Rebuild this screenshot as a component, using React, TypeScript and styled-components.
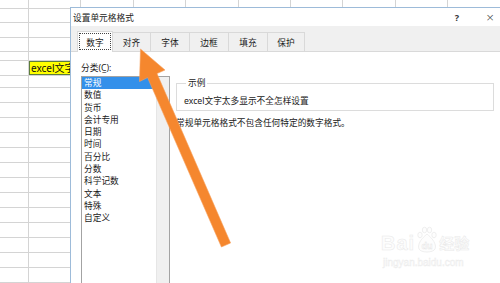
import React from "react";
import styled, { createGlobalStyle } from "styled-components";

const GlobalStyle = createGlobalStyle`
  html, body {
    margin: 0;
    padding: 0;
    background: #ffffff;
  }
  body {
    font-family: "Noto Sans", "Noto Sans CJK SC", sans-serif;
    color: #1a1a1a;
  }
`;

// row heights of the worksheet behind the dialog (px)
const ROWS = [9, 14, 15, 14, 9, 15, 12, 15, 15, 15, 15, 15, 15, 15, 15, 15, 15, 15, 15, 15];
const COLS = 10;

const TABS = ["数字", "对齐", "字体", "边框", "填充", "保护"];
const TAB_WIDTHS = [36, 39, 40, 40, 40, 38];

const CATEGORIES = [
  "常规",
  "数值",
  "货币",
  "会计专用",
  "日期",
  "时间",
  "百分比",
  "分数",
  "科学记数",
  "文本",
  "特殊",
  "自定义",
];

const Screen = styled.div`
  position: relative;
  width: 500px;
  height: 283px;
  overflow: hidden;
  background: #ffffff;
`;

/* worksheet */

const Sheet = styled.div`
  display: grid;
  grid-template-columns: 29px repeat(${COLS - 1}, 52.4px);
  grid-template-rows: ${ROWS.map((h) => `${h}px`).join(" ")};
`;

const Cell = styled.div<{ $marked?: boolean }>`
  box-sizing: border-box;
  border-right: 1px solid #d4d4d4;
  border-bottom: 1px solid #d4d4d4;
  background: ${(p) => (p.$marked ? "#ffff00" : "#ffffff")};
  ${(p) => p.$marked && "box-shadow: inset 0 0 0 1px #5d7d3c;"}
  font-family: "Noto Sans", "Noto Sans CJK SC", sans-serif;
  font-size: 10px;
  line-height: 14px;
  padding-left: 2px;
  white-space: nowrap;
  overflow: visible;
  color: #111;
`;

/* dialog window */

const Dialog = styled.div`
  position: absolute;
  left: 70px;
  top: 7px;
  width: 440px;
  height: 290px;
  box-sizing: border-box;
  border: 1px solid #9dbbd9;
  background: #ffffff;
  display: flex;
  flex-direction: column;
`;

const TitleBar = styled.div`
  height: 19px;
  display: flex;
  align-items: center;
  padding-left: 2px;
  font-size: 8.7px;
`;

const Title = styled.span`
  flex: 1;
`;

const TitleButton = styled.span<{ $close?: boolean }>`
  width: 20px;
  text-align: center;
  font-family: ${(p) => (p.$close ? '"DejaVu Sans"' : '"Noto Sans"')}, sans-serif;
  font-size: ${(p) => (p.$close ? "11px" : "9px")};
  font-weight: ${(p) => (p.$close ? 300 : 700)};
  color: #333;
  margin-right: ${(p) => (p.$close ? "9px" : "13px")};
`;

const TabStrip = styled.div`
  height: 26px;
  box-sizing: border-box;
  background: #f0f0f0;
  display: flex;
  align-items: flex-end;
  padding-left: 6px;
`;

const Tab = styled.div<{ $active?: boolean; $w: number }>`
  position: relative;
  z-index: ${(p) => (p.$active ? 1 : 0)};
  width: ${(p) => p.$w}px;
  height: ${(p) => (p.$active ? 21 : 19)}px;
  margin-right: -1px;
  margin-bottom: ${(p) => (p.$active ? -1 : 0)}px;
  box-sizing: border-box;
  border: 1px solid #d9d9d9;
  border-bottom: none;
  background: ${(p) => (p.$active ? "#ffffff" : "#f0f0f0")};
  display: flex;
  align-items: center;
  justify-content: center;
  font-size: 8.7px;
  ${(p) => p.$active && "outline: 1px dotted #444; outline-offset: -3px;"}
`;

const TabPage = styled.div`
  flex: 1;
  border-top: 1px solid #d9d9d9;
  display: flex;
  gap: 6px;
  padding: 10px 0 0 10px;
`;

const CategoryColumn = styled.div`
  width: 89px;
  display: flex;
  flex-direction: column;
`;

const FieldLabel = styled.div`
  font-size: 8.7px;
  line-height: 12px;
  margin-bottom: 2px;
`;

const ListBox = styled.div`
  height: 220px;
  box-sizing: border-box;
  border: 1px solid #a3a3a3;
  display: flex;
`;

const ListItems = styled.div`
  flex: 1;
  display: flex;
  flex-direction: column;
`;

const ListItem = styled.div<{ $selected?: boolean }>`
  font-size: 8.7px;
  line-height: 12.3px;
  padding-left: 2px;
  background: ${(p) => (p.$selected ? "#3390ea" : "transparent")};
  color: ${(p) => (p.$selected ? "#ffffff" : "#1a1a1a")};
`;

const ScrollTrack = styled.div`
  width: 12px;
  background: #f0f0f0;
  border-left: 1px solid #e6e6e6;
`;

const DetailColumn = styled.div`
  flex: 1;
  padding-top: 16px;
  margin-right: 15px;
`;

const GroupBox = styled.fieldset`
  margin: 0;
  min-width: 0;
  border: 1px solid #dcdcdc;
  padding: 7px 8px 3px 7px;
`;

const GroupLegend = styled.legend`
  font-size: 8.7px;
  line-height: 10px;
  padding: 0 2px;
  margin-left: 2px;
`;

const SampleText = styled.div`
  font-size: 8.7px;
  line-height: 12px;
`;

const Description = styled.div`
  margin-top: 6px;
  font-size: 8.7px;
  line-height: 12px;
`;

/* overlays */

const ArrowLayer = styled.svg`
  position: absolute;
  left: 0;
  top: 0;
  pointer-events: none;
`;

const Watermark = styled.div`
  position: absolute;
  left: 381px;
  top: 226px;
  display: flex;
  flex-direction: column;
  pointer-events: none;
`;

const MarkLine = styled.div`
  display: flex;
  align-items: flex-end;
`;

const MarkWord = styled.span<{ $cjk?: boolean }>`
  font-family: ${(p) => (p.$cjk ? '"Noto Sans CJK SC"' : '"Liberation Sans"')}, sans-serif;
  font-size: ${(p) => (p.$cjk ? "15px" : "20px")};
  font-weight: 700;
  line-height: 20px;
  letter-spacing: ${(p) => (p.$cjk ? "0" : "1px")};
  color: #fdfdfd;
  -webkit-text-stroke: 0.5px #e9e9e9;
`;

const MarkUrl = styled.span`
  font-family: "Liberation Sans", sans-serif;
  font-size: 10px;
  line-height: 14px;
  margin-top: 3px;
  margin-left: 2px;
  color: #fbfbfb;
  -webkit-text-stroke: 0.4px #ebebeb;
`;

function PawMark() {
  return (
    <svg width="24" height="27" viewBox="0 0 24 27">
      <g fill="#fdfdfd" stroke="#e8e8e8" strokeWidth="0.7">
        <ellipse cx="5" cy="9" rx="2.2" ry="2.8" />
        <ellipse cx="9.5" cy="4" rx="2.2" ry="2.8" />
        <ellipse cx="14.5" cy="4" rx="2.2" ry="2.8" />
        <ellipse cx="19" cy="9" rx="2.2" ry="2.8" />
        <path d="M12 8 C 7 12, 2 18, 4 23 C 6 27, 18 27, 20 23 C 22 18, 17 12, 12 8 Z" />
      </g>
      <text
        x="12"
        y="22.5"
        textAnchor="middle"
        fontFamily="Liberation Sans, sans-serif"
        fontSize="9"
        fontWeight="700"
        fill="#fdfdfd"
        stroke="#e4e4e4"
        strokeWidth="0.4"
      >
        du
      </text>
    </svg>
  );
}

function PointerArrow() {
  // tip near the 对齐 tab, tail lower right
  const pts = "140.5,49 165,70 157,73.6 230.6,243 221.4,247 147.6,77.6 139.5,81.5";
  return (
    <ArrowLayer width="500" height="283" viewBox="0 0 500 283">
      <polygon points={pts} fill="#f5872e" stroke="#f8a15c" strokeWidth="0.6" strokeLinejoin="round" />
    </ArrowLayer>
  );
}

function Worksheet() {
  return (
    <Sheet>
      {ROWS.map((_, r) =>
        Array.from({ length: COLS }).map((__, c) => {
          const marked = r === 5 && c === 1;
          return (
            <Cell key={`${r}-${c}`} $marked={marked}>
              {marked ? "excel文字太多显示不全怎样设置" : null}
            </Cell>
          );
        })
      )}
    </Sheet>
  );
}

function FormatCellsDialog() {
  return (
    <Dialog>
      <TitleBar>
        <Title>设置单元格格式</Title>
        <TitleButton>?</TitleButton>
        <TitleButton $close>×</TitleButton>
      </TitleBar>
      <TabStrip>
        {TABS.map((t, i) => (
          <Tab key={t} $w={TAB_WIDTHS[i]} $active={i === 0}>
            {t}
          </Tab>
        ))}
      </TabStrip>
      <TabPage>
        <CategoryColumn>
          <FieldLabel>{"分类(C\u0332):"}</FieldLabel>
          <ListBox>
            <ListItems>
              {CATEGORIES.map((c, i) => (
                <ListItem key={c} $selected={i === 0}>
                  {c}
                </ListItem>
              ))}
            </ListItems>
            <ScrollTrack />
          </ListBox>
        </CategoryColumn>
        <DetailColumn>
          <GroupBox>
            <GroupLegend>示例</GroupLegend>
            <SampleText>excel文字太多显示不全怎样设置</SampleText>
          </GroupBox>
          <Description>常规单元格格式不包含任何特定的数字格式。</Description>
        </DetailColumn>
      </TabPage>
    </Dialog>
  );
}

export default function App() {
  return (
    <Screen>
      <GlobalStyle />
      <Worksheet />
      <FormatCellsDialog />
      <PointerArrow />
      <Watermark>
        <MarkLine>
          <MarkWord>Bai</MarkWord>
          <PawMark />
          <MarkWord $cjk>经验</MarkWord>
        </MarkLine>
        <MarkUrl>jingyan.baidu.com</MarkUrl>
      </Watermark>
    </Screen>
  );
}
